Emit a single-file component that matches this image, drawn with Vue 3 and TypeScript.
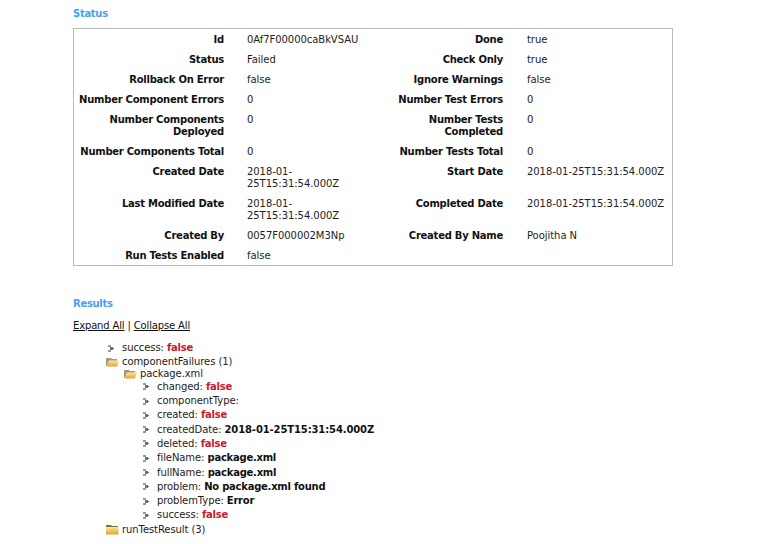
<script setup lang="ts">
interface Row { a: string; b: string; c: string; d: string }
const rows: Row[] = [
  { a: 'Id', b: '0Af7F00000caBkVSAU', c: 'Done', d: 'true' },
  { a: 'Status', b: 'Failed', c: 'Check Only', d: 'true' },
  { a: 'Rollback On Error', b: 'false', c: 'Ignore Warnings', d: 'false' },
  { a: 'Number Component Errors', b: '0', c: 'Number Test Errors', d: '0' },
  { a: 'Number Components Deployed', b: '0', c: 'Number Tests Completed', d: '0' },
  { a: 'Number Components Total', b: '0', c: 'Number Tests Total', d: '0' },
  { a: 'Created Date', b: '2018-01-25T15:31:54.000Z', c: 'Start Date', d: '2018-01-25T15:31:54.000Z' },
  { a: 'Last Modified Date', b: '2018-01-25T15:31:54.000Z', c: 'Completed Date', d: '2018-01-25T15:31:54.000Z' },
  { a: 'Created By', b: '0057F000002M3Np', c: 'Created By Name', d: 'Poojitha N' },
  { a: 'Run Tests Enabled', b: 'false', c: '', d: '' },
]
const leaves: { k: string; v: string; bad?: boolean; date?: boolean }[] = [
  { k: 'changed', v: 'false', bad: true },
  { k: 'componentType', v: '' },
  { k: 'created', v: 'false', bad: true },
  { k: 'createdDate', v: '2018-01-25T15:31:54.000Z', date: true },
  { k: 'deleted', v: 'false', bad: true },
  { k: 'fileName', v: 'package.xml' },
  { k: 'fullName', v: 'package.xml' },
  { k: 'problem', v: 'No package.xml found' },
  { k: 'problemType', v: 'Error' },
  { k: 'success', v: 'false', bad: true },
]
</script>

<template>
  <main class="page">
    <svg class="defs" width="0" height="0" aria-hidden="true">
      <defs>
        <linearGradient id="fy" x1="0" y1="0" x2="0" y2="1">
          <stop offset="0" stop-color="#fbe79a" />
          <stop offset="1" stop-color="#e0a52e" />
        </linearGradient>
      </defs>
    </svg>
    <h2 class="heading">Status</h2>
    <section class="box">
      <div v-for="r in rows" :key="r.a" class="row">
        <div class="label">{{ r.a }}</div>
        <div class="value">{{ r.b }}</div>
        <div class="label second">{{ r.c }}</div>
        <div class="value end">{{ r.d }}</div>
      </div>
    </section>

    <h2 class="heading results">Results</h2>
    <p class="links"><a class="link">Expand All</a> | <a class="link">Collapse All</a></p>

    <div class="tree">
      <div class="node leaf">
        <svg class="bullet" width="6" height="7" viewBox="0 0 6 7"><path d="M0 0h3v2H0zM0 5h3v2H0z" fill="#9a9a9a"/><path d="M2 2h3v1h1v1H5v1H2z" fill="#6f6f6f"/></svg>
        <span>success: <b class="bad">false</b></span>
      </div>
      <div class="node branch first">
        <svg class="folder" width="13" height="10" viewBox="0 0 13 10"><path d="M0 1h5l1 1h5v2H3L1 9H0z" fill="#a89a78"/><path d="M1 9.500 3 3.500h10L11 9.500z" fill="url(#fy)"/></svg>
        <span>componentFailures (1)</span>
      </div>
      <div class="indent">
        <div class="node branch inner">
          <svg class="folder" width="13" height="10" viewBox="0 0 13 10"><path d="M0 1h5l1 1h5v2H3L1 9H0z" fill="#a89a78"/><path d="M1 9.500 3 3.500h10L11 9.500z" fill="url(#fy)"/></svg>
          <span>package.xml</span>
        </div>
        <div class="indent">
          <div v-for="l in leaves" :key="l.k" class="node leaf">
            <svg class="bullet" width="6" height="7" viewBox="0 0 6 7"><path d="M0 0h3v2H0zM0 5h3v2H0z" fill="#9a9a9a"/><path d="M2 2h3v1h1v1H5v1H2z" fill="#6f6f6f"/></svg>
            <span>{{ l.k }}: <b :class="{ bad: l.bad, date: l.date }">{{ l.v }}</b></span>
          </div>
        </div>
      </div>
      <div class="node last">
        <svg class="folder" width="13" height="10" viewBox="0 0 13 10"><path d="M0 0h5l1 1h6v1H0z" fill="#7d6f4e"/><path d="M0 2h12.500v7.500H0z" fill="url(#fy)"/></svg>
        <span>runTestResult (3)</span>
      </div>
    </div>
  </main>
</template>

<style scoped>
.page {
  width: 772px;
  height: 544px;
  box-sizing: border-box;
  padding: 8px 0 0 73px;
  overflow: hidden;
  font-family: "DejaVu Sans", Verdana, sans-serif;
  font-size: 10px;
  line-height: 12px;
  color: #222;
  background: #fff;
}
.defs { position: absolute; }
.heading {
  margin: 0;
  font-size: 10px;
  line-height: 12px;
  font-weight: bold;
  letter-spacing: -0.3px;
  color: #4a9ff0;
}
.box {
  width: 600px;
  height: 238px;
  box-sizing: border-box;
  margin-top: 8px;
  padding: 1px 0;
  border: 1px solid #bbb;
}
.row {
  display: grid;
  grid-template-columns: 150px 126px 153px 1fr;
  padding: 4px 0;
}
.row > .label {
  text-align: right;
  font-weight: bold;
  letter-spacing: -0.25px;
  color: #111;
}
.row > .label.second { padding-left: 36px; }
.row > .value {
  padding-left: 23px;
  letter-spacing: -0.05px;
}
.row > .value.end { padding-left: 24px; }
.results { margin-top: 32px; }
.links { margin: 10px 0 0; color: #222; letter-spacing: -0.15px; }
.link { text-decoration: underline; color: #111; }
.tree { margin-top: 9px; padding-left: 33px; letter-spacing: -0.08px; }
.node {
  display: flex;
  align-items: center;
}
.leaf { height: 14.300px; }
.branch { height: 12px; }
.branch.first { height: 13px; }
.branch.inner { height: 11.300px; }
.last { height: 14.300px; margin-top: 0.700px; }
.bullet { margin: 0 8px 0 2px; flex: none; }
.folder { margin-right: 3px; flex: none; }
.indent { padding-left: 18px; }
.indent .indent { padding-left: 17px; }
b { color: #111; letter-spacing: -0.25px; }
b.date { letter-spacing: -0.12px; }
b.bad { color: #c4202c; }
</style>
